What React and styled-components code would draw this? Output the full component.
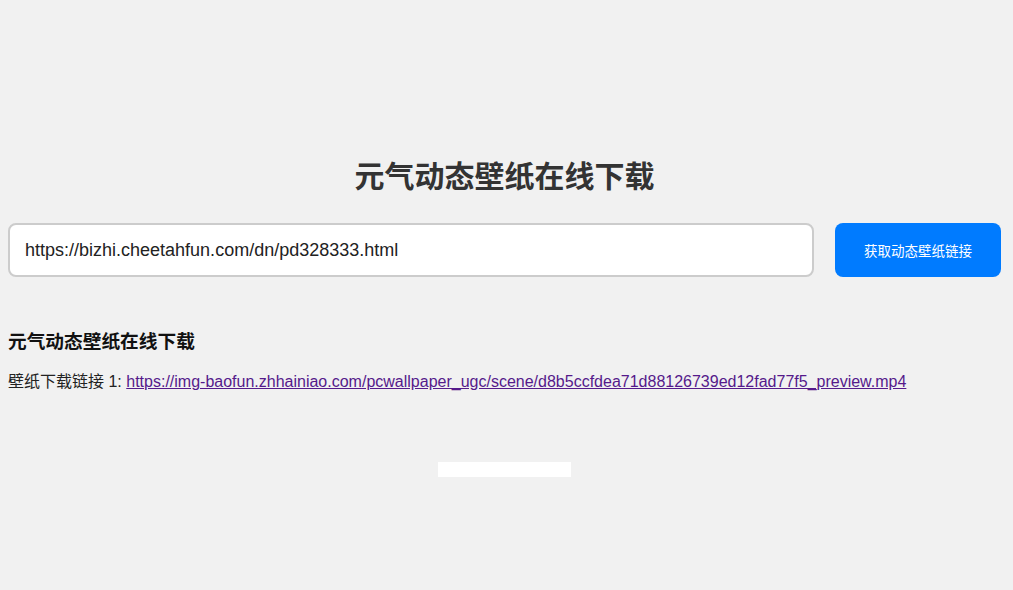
import React, { useState } from 'react';
import styled, { createGlobalStyle } from 'styled-components';

const GlobalStyle = createGlobalStyle`
  body {
    margin: 0;
    background: #f1f1f1;
    font-family: "Liberation Sans", Arial, "Noto Sans CJK SC", sans-serif;
  }
`;

const Page = styled.div`
  padding: 150px 12px 0 8px;
`;

const Title = styled.h1`
  margin: 0;
  text-align: center;
  font-size: 30px;
  line-height: 48px;
  font-weight: 700;
  color: #333;
  font-family: "Noto Sans CJK SC", sans-serif;
`;

const Form = styled.div`
  display: flex;
  gap: 21px;
  margin-top: 25px;
`;

const Input = styled.input`
  flex: 1;
  height: 54px;
  box-sizing: border-box;
  padding: 0 15px;
  border: 2px solid #ccc;
  border-radius: 8px;
  background: #fff;
  font-size: 18px;
  color: #222;
  font-family: "Liberation Sans", Arial, sans-serif;
  outline: none;
`;

const Button = styled.button`
  width: 166px;
  height: 54px;
  border: none;
  border-radius: 8px;
  background: #007bff;
  color: #fff;
  font-size: 13.5px;
  font-family: "Noto Sans CJK SC", sans-serif;
  cursor: pointer;
`;

const Result = styled.div`
  margin-top: 49px;
`;

const ResultTitle = styled.h3`
  margin: 0;
  font-size: 18.7px;
  line-height: 28px;
  font-weight: 700;
  color: #111;
  font-family: "Noto Sans CJK SC", sans-serif;
`;

const Line = styled.p`
  margin: 17px 0 0;
  font-size: 16px;
  line-height: 22px;
  color: #222;
  font-family: "Liberation Sans", Arial, "Noto Sans CJK SC", sans-serif;
`;

const Link = styled.a`
  color: #551a8b;
`;

const Blank = styled.div`
  width: 133px;
  height: 15px;
  margin: 69px auto 0;
  background: #fff;
`;

const App = () => {
  const [url, setUrl] = useState('https://bizhi.cheetahfun.com/dn/pd328333.html');
  const link =
    'https://img-baofun.zhhainiao.com/pcwallpaper_ugc/scene/d8b5ccfdea71d88126739ed12fad77f5_preview.mp4';

  return (
    <Page>
      <GlobalStyle />
      <Title>元气动态壁纸在线下载</Title>
      <Form>
        <Input value={url} onChange={(e) => setUrl(e.target.value)} />
        <Button>获取动态壁纸链接</Button>
      </Form>
      <Result>
        <ResultTitle>元气动态壁纸在线下载</ResultTitle>
        <Line>
          壁纸下载链接 1: <Link href={link}>{link}</Link>
        </Line>
      </Result>
      <Blank />
    </Page>
  );
};

export default App;
